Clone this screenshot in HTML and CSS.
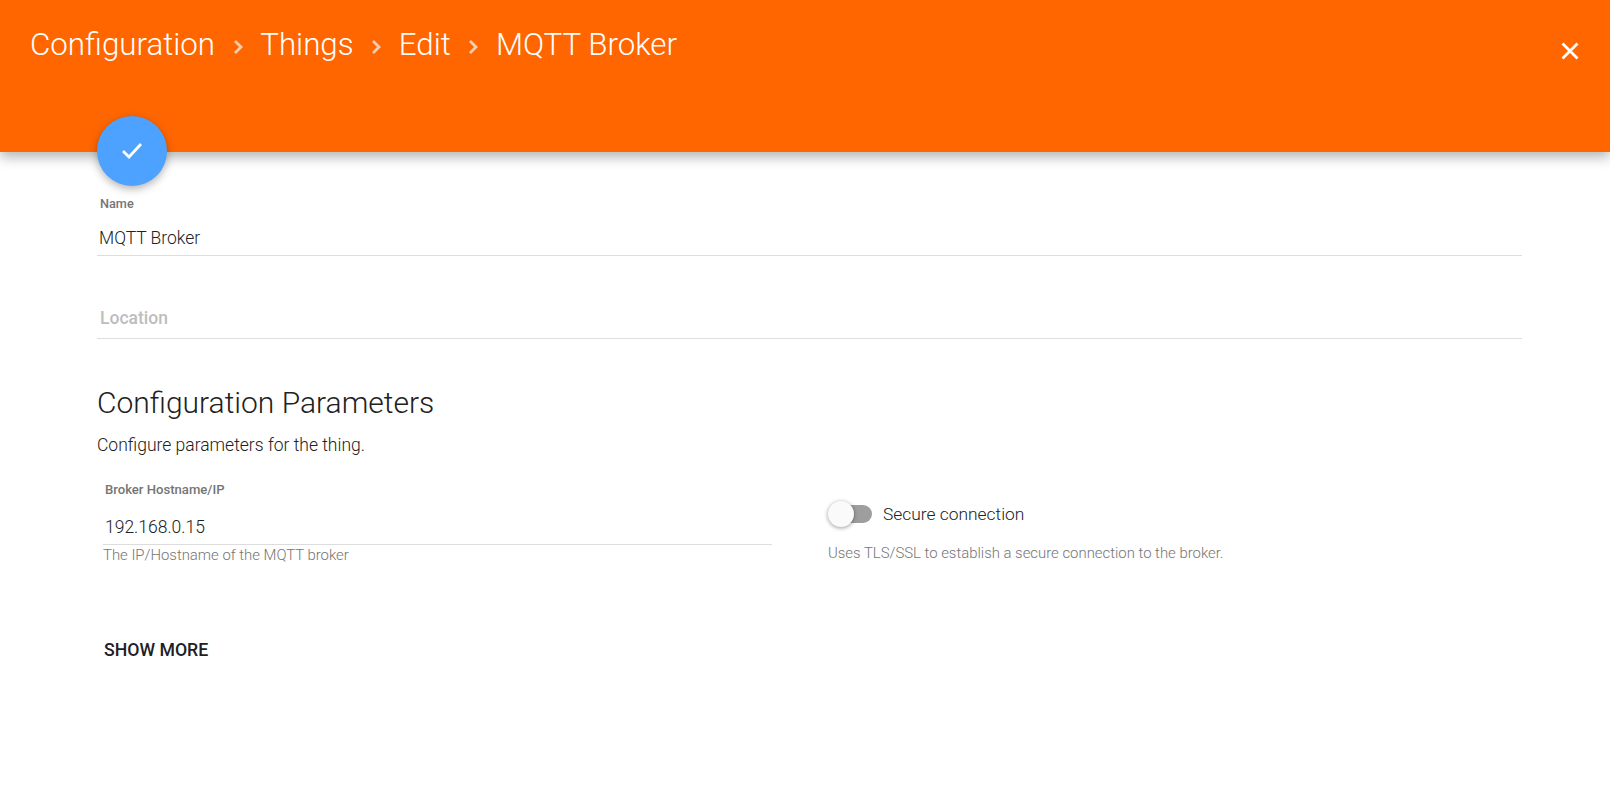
FILE: index.html
```html
<!DOCTYPE html>
<html lang="en">
<head>
    <meta charset="UTF-8">
    <title>MQTT Broker</title>
    <link rel="stylesheet" href="styles.css">
</head>
<body>
    <header class="page-header">
        <div class="crumbs">
            <span>Configuration</span>
            <svg class="crumb-arrow" viewBox="0 0 10 16"><path d="M2 2l6 6-6 6"/></svg>
            <span>Things</span>
            <svg class="crumb-arrow" viewBox="0 0 10 16"><path d="M2 2l6 6-6 6"/></svg>
            <span>Edit</span>
            <svg class="crumb-arrow" viewBox="0 0 10 16"><path d="M2 2l6 6-6 6"/></svg>
            <span>MQTT Broker</span>
        </div>
        <svg class="close-icon" viewBox="0 0 18 18"><path d="M1.5 1.5l15 15M16.5 1.5l-15 15"/></svg>
        <button class="fab">
            <svg viewBox="0 0 24 24"><path d="M3 13l6 6L21 6"/></svg>
        </button>
    </header>

    <main class="content">
        <div class="field field-name">
            <label class="field-label">Name</label>
            <div class="field-value">MQTT Broker</div>
        </div>
        <div class="field field-location">
            <div class="placeholder">Location</div>
        </div>

        <h2 class="section-title">Configuration Parameters</h2>
        <p class="section-desc">Configure parameters for the thing.</p>

        <div class="params">
            <div class="param">
                <label class="param-label">Broker Hostname/IP</label>
                <div class="param-value">192.168.0.15</div>
                <div class="hint">The IP/Hostname of the MQTT broker</div>
            </div>
            <div class="param param-toggle">
                <div class="toggle-row">
                    <span class="toggle"><span class="toggle-knob"></span></span>
                    <span class="toggle-label">Secure connection</span>
                </div>
                <div class="hint">Uses TLS/SSL to establish a secure connection to the broker.</div>
            </div>
        </div>

        <button class="show-more">SHOW MORE</button>
    </main>
</body>
</html>
```

FILE: styles.css
```css
* {
    box-sizing: border-box;
}
body {
    margin: 0;
    font-family: Roboto, sans-serif;
    background-color: #fff;
    color: #212121;
    overflow: hidden;
}
.page-header {
    position: relative;
    height: 152px;
    padding: 25px 0 0 30px;
    background-color: #ff6600;
    box-shadow: 0 5px 12px rgba(0,0,0,0.3);
}
.crumbs {
    display: flex;
    align-items: center;
    gap: 17.6px;
    font-size: 31.3px;
    font-weight: 300;
    line-height: 40px;
    color: #fff;
}
.crumb-arrow {
    width: 10px;
    height: 16px;
    margin-top: 4px;
    fill: none;
    stroke: #f3cdb0;
    stroke-width: 2.8;
}
.close-icon {
    position: absolute;
    top: 42px;
    right: 31px;
    width: 18px;
    height: 18px;
    fill: none;
    stroke: #fff;
    stroke-width: 2.8;
}
.fab {
    position: absolute;
    top: 116px;
    left: 97px;
    display: flex;
    align-items: center;
    justify-content: center;
    width: 70px;
    height: 70px;
    padding: 0;
    border: none;
    border-radius: 50%;
    background-color: #4da2ff;
    box-shadow: 0 3px 8px rgba(0,0,0,0.3);
}
.fab svg {
    width: 24px;
    height: 24px;
    margin-top: -2px;
    fill: none;
    stroke: #fff;
    stroke-width: 2.8;
}

.content {
    padding: 45px 88px 0 97px;
}
.field {
    border-bottom: 1px solid #ddd;
}
.field-name {
    height: 59px;
}
.field-label {
    display: block;
    padding-left: 3px;
    font-size: 12.7px;
    font-weight: 500;
    line-height: 14px;
    color: #757575;
}
.field-value {
    margin-top: 17px;
    padding-left: 2px;
    font-size: 17.5px;
    font-weight: 300;
    line-height: 20px;
}
.field-location {
    height: 48px;
    margin-top: 35px;
    padding: 17px 0 0 3px;
}
.placeholder {
    font-size: 17.5px;
    font-weight: 500;
    line-height: 20px;
    color: #bdbdbd;
}
.section-title {
    margin: 46px 0 0;
    font-size: 30px;
    font-weight: 300;
    line-height: 36px;
}
.section-desc {
    margin: 14px 0 0;
    font-size: 17.5px;
    font-weight: 300;
    line-height: 20px;
}
.params {
    display: flex;
    margin-top: 28px;
}
.param {
    width: 669px;
    margin-left: 6px;
}
.param-label {
    display: block;
    padding-left: 2px;
    font-size: 13.1px;
    font-weight: 500;
    line-height: 14px;
    color: #757575;
}
.param-value {
    height: 48px;
    padding: 19px 0 0 2px;
    border-bottom: 1px solid #ddd;
    font-size: 17.5px;
    font-weight: 300;
    line-height: 22px;
}
.hint {
    margin-top: 1px;
    font-size: 14.9px;
    font-weight: 300;
    line-height: 18px;
    color: #757575;
}
.param-toggle {
    width: auto;
    margin-left: 56px;
    padding-top: 21px;
}
.toggle-row {
    display: flex;
    align-items: center;
    gap: 11px;
    margin-bottom: 20px;
}
.toggle {
    position: relative;
    width: 42px;
    height: 18px;
    margin-left: 2px;
    border-radius: 9px;
    background-color: #9e9e9e;
}
.toggle-knob {
    position: absolute;
    top: -4px;
    left: -2px;
    width: 26px;
    height: 26px;
    border-radius: 50%;
    background-color: #fafafa;
    box-shadow: 0 1px 4px rgba(0,0,0,0.4);
}
.toggle-label {
    font-size: 17.4px;
    font-weight: 300;
    line-height: 20px;
}
.show-more {
    display: block;
    margin: 76px 0 0 7px;
    padding: 0;
    border: none;
    background: none;
    font-family: Roboto, sans-serif;
    font-size: 17.7px;
    font-weight: 500;
    line-height: 20px;
    color: #212121;
}
```
